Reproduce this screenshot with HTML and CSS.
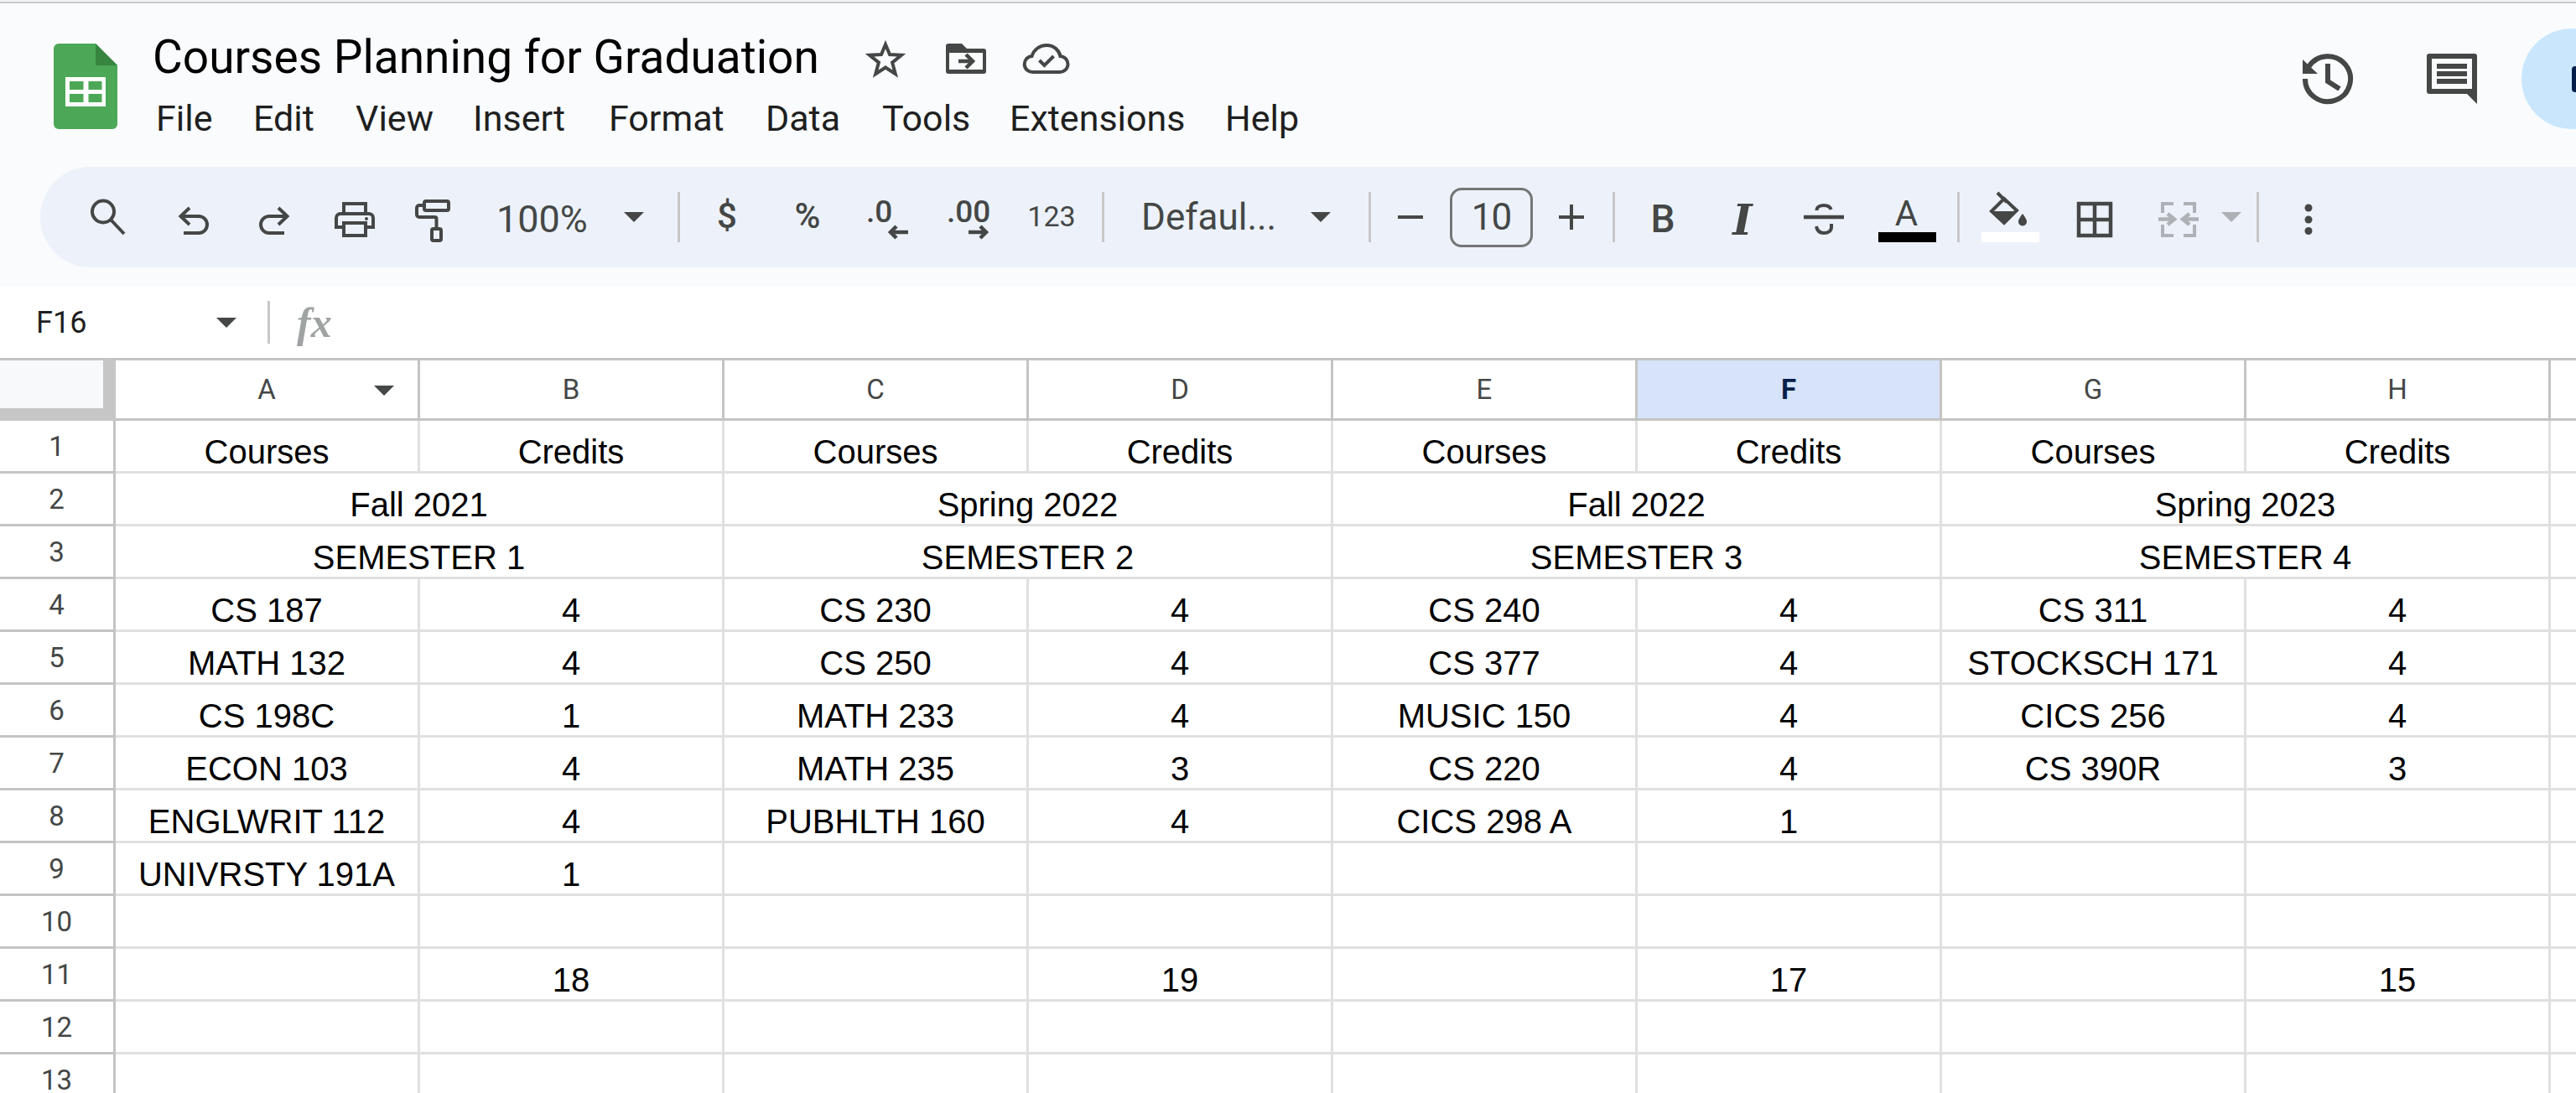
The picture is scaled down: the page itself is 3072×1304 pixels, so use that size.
FILE: index.html
```html
<!DOCTYPE html>
<html lang="en">
<head>
  <meta charset="UTF-8">
  <title>Courses Planning for Graduation</title>
  <link rel="stylesheet" href="styles.css">
</head>
<body>
  <div class="top-line"></div>

  <div class="chrome">
    <!-- Title row -->
    <div class="head">
      <svg class="logo" viewBox="0 0 76 102">
        <path class="logo-body" d="M6 0H50L76 26V96a6 6 0 0 1-6 6H6a6 6 0 0 1-6-6V6a6 6 0 0 1 6-6z"/>
        <path class="logo-fold" d="M50 0L76 26H50z"/>
        <path class="logo-grid" fill-rule="evenodd" d="M14 40H62V75H14zM19 45V55H35.500V45zM41.500 45V55H57.500V45zM19 60V70H35.500V60zM41.500 60V70H57.500V60z"/>
      </svg>

      <div class="head-main">
        <div class="title-row">
          <div class="doc-title">Courses Planning for Graduation</div>
          <svg class="ico title-ico" viewBox="0 0 60 60">
            <path d="M30 13L35 25.100L49 25.800L38.100 34.600L41.800 48.200L30 40.500L18.200 48.200L21.900 34.600L11 25.800L25 25.100z"/>
          </svg>
          <svg class="ico title-ico" viewBox="0 0 60 60">
            <path class="solid" fill-rule="evenodd" d="M9 12H25L31 18H51a3 3 0 0 1 3 3V45a3 3 0 0 1-3 3H9a3 3 0 0 1-3-3V15a3 3 0 0 1 3-3zM10 23V43H50V23z"/>
            <path class="thick" d="M21 33H37M30 25L38 33L30 41"/>
          </svg>
          <svg class="ico title-ico" viewBox="0 0 60 60">
            <path d="M14 46a9.500 9.500 0 0 1-1.500-19C15 19 22 14 30 14c9 0 15 6 16.500 13a9.500 9.500 0 0 1-1 19z"/>
            <path d="M21.500 32l6 6 11-11"/>
          </svg>
        </div>
        <div class="menu">
          <span>File</span>
          <span>Edit</span>
          <span>View</span>
          <span>Insert</span>
          <span>Format</span>
          <span>Data</span>
          <span>Tools</span>
          <span>Extensions</span>
          <span>Help</span>
        </div>
      </div>

      <div class="head-right">
        <svg class="big-ico history" viewBox="0 0 72 72">
          <path class="ring" d="M9 36A27 27 0 1 0 13 22"/>
          <path class="solid" d="M6 13V30H24z"/>
          <path class="ring" d="M36 18V39L50 48"/>
        </svg>
        <svg class="big-ico comments" viewBox="0 0 72 72">
          <path class="solid" fill-rule="evenodd" d="M9 6H63a3 3 0 0 1 3 3V66L54 54H9a3 3 0 0 1-3-3V9a3 3 0 0 1 3-3zM12 12V48H60V12z"/>
          <path class="solid" d="M18 18H54V24H18zM18 27H54V33H18zM18 36H54V42H18z"/>
        </svg>
        <div class="share"><span class="share-ico"></span></div>
      </div>
    </div>

    <!-- Toolbar -->
    <div class="toolbar">
      <svg class="ico" viewBox="0 0 60 60">
        <circle cx="25" cy="23.500" r="13"/>
        <path d="M34 33L50 50"/>
      </svg>
      <svg class="ico" viewBox="0 0 60 60">
        <path d="M25 19L14.500 29L25 39"/>
        <path d="M15 29H36a10 10 0 0 1 0 20H18"/>
      </svg>
      <svg class="ico" viewBox="0 0 60 60">
        <path d="M35 19L45.500 29L35 39"/>
        <path d="M45 29H24a10 10 0 0 0 0 20H42"/>
      </svg>
      <svg class="ico" viewBox="0 0 60 60">
        <path d="M17 25V14H43V25"/>
        <path d="M15 42H8V31a5 5 0 0 1 5-5H47a5 5 0 0 1 5 5V42H45"/>
        <rect x="17" y="37" width="26" height="15"/>
        <circle class="solid" cx="44" cy="32" r="2"/>
      </svg>
      <svg class="ico" viewBox="0 0 60 60">
        <rect x="20" y="11" width="29" height="11" rx="2"/>
        <path d="M20 16H14a3 3 0 0 0-3 3V27a3 3 0 0 0 3 3H32.500a2 2 0 0 1 2 2V42"/>
        <rect x="29" y="44" width="11" height="14" rx="2"/>
      </svg>
      <div class="tb-text zoom-text">100%</div>
      <span class="caret tb-caret"></span>
      <span class="tb-sep"></span>

      <svg class="ico" viewBox="0 0 60 60"><text class="num" x="30" y="43" text-anchor="middle">$</text></svg>
      <svg class="ico" viewBox="0 0 60 60"><text class="num" x="30" y="43" text-anchor="middle">%</text></svg>
      <svg class="ico" viewBox="0 0 60 60">
        <text class="dec" x="4" y="36">.0</text>
        <path class="thick" d="M54 48H33M40 41L33 48L40 55"/>
      </svg>
      <svg class="ico" viewBox="0 0 60 60">
        <text class="dec" x="4" y="36">.00</text>
        <path class="thick" d="M30 48H51M44 41L51 48L44 55"/>
      </svg>
      <svg class="ico" viewBox="0 0 60 60"><text class="digits" x="30" y="41" text-anchor="middle">123</text></svg>
      <span class="tb-sep"></span>

      <div class="tb-text font-name">Defaul...</div>
      <span class="caret tb-caret"></span>
      <span class="tb-sep"></span>

      <svg class="ico" viewBox="0 0 60 60"><path d="M15 30H45"/></svg>
      <div class="font-size">10</div>
      <svg class="ico" viewBox="0 0 60 60"><path d="M15 30H45M30 15V45"/></svg>
      <span class="tb-sep"></span>

      <svg class="ico" viewBox="0 0 60 60"><text class="bold" x="30" y="48" text-anchor="middle">B</text></svg>
      <svg class="ico" viewBox="0 0 60 60"><text class="ital" x="30" y="51" text-anchor="middle">I</text></svg>
      <svg class="ico" viewBox="0 0 60 60">
        <path class="thick" d="M6 30H54"/>
        <path d="M21.500 22c0-4 4-6 8.500-6s7.500 1.500 8.500 5"/>
        <path d="M21 41c1 5 4 8 9 8 5.500 0 9-2.500 9-7V38"/>
      </svg>
      <svg class="ico" viewBox="0 0 60 60">
        <text class="letter" x="29.500" y="40" text-anchor="middle">A</text>
        <rect class="bar-black" x="-4" y="48" width="69" height="12"/>
      </svg>
      <span class="tb-sep"></span>

      <svg class="ico" viewBox="0 0 60 60">
        <path d="M15 1L26 12"/>
        <path d="M8 23L23 8L38 22L23 37z"/>
        <path class="solid" d="M8 23H38L23 37z"/>
        <path class="solid" d="M45 26c0 0-5 6-5 9.500a5 5 0 0 0 10 0c0-3.500-5-9.500-5-9.500z"/>
        <rect class="bar-white" x="-4" y="48" width="69" height="12"/>
      </svg>
      <svg class="ico" viewBox="0 0 60 60">
        <path class="thick" d="M11 14H49V52H11zM30 14V52M11 33H49"/>
      </svg>
      <svg class="ico off" viewBox="0 0 60 60">
        <path d="M24 14H11V25M11 39V52H24M36 14H49V25M49 39V52H36"/>
        <path class="thick" d="M6 32.500H24M17 26L25 32.500L17 39M54 32.500H36M43 26L35 32.500L43 39"/>
      </svg>
      <span class="caret caret-off tb-caret"></span>
      <span class="tb-sep"></span>

      <svg class="ico" viewBox="0 0 60 60">
        <circle class="solid" cx="30" cy="19" r="4.500"/>
        <circle class="solid" cx="30" cy="33" r="4.500"/>
        <circle class="solid" cx="30" cy="46.500" r="4.500"/>
      </svg>
    </div>
  </div>

  <!-- Name box and formula bar -->
  <div class="formula-bar">
    <div class="name-box">F16</div>
    <span class="caret"></span>
    <span class="fx-sep"></span>
    <div class="fx">fx</div>
  </div>

  <table class="sheet">
    <colgroup>
      <col class="col-head">
      <col class="col"><col class="col"><col class="col"><col class="col">
      <col class="col"><col class="col"><col class="col"><col class="col">
      <col class="col-edge">
    </colgroup>
    <thead>
      <tr>
        <th class="corner"><div class="corner-box"></div></th>
        <th>A<span class="caret col-caret"></span></th>
        <th>B</th><th>C</th><th>D</th><th>E</th>
        <th class="selected">F</th>
        <th>G</th><th>H</th><th></th>
      </tr>
    </thead>
    <tbody>
      <tr><th>1</th><td>Courses</td><td>Credits</td><td>Courses</td><td>Credits</td><td>Courses</td><td>Credits</td><td>Courses</td><td>Credits</td><td></td></tr>
      <tr><th>2</th><td colspan="2">Fall 2021</td><td colspan="2">Spring 2022</td><td colspan="2">Fall 2022</td><td colspan="2">Spring 2023</td><td></td></tr>
      <tr><th>3</th><td colspan="2">SEMESTER 1</td><td colspan="2">SEMESTER 2</td><td colspan="2">SEMESTER 3</td><td colspan="2">SEMESTER 4</td><td></td></tr>
      <tr><th>4</th><td>CS 187</td><td>4</td><td>CS 230</td><td>4</td><td>CS 240</td><td>4</td><td>CS 311</td><td>4</td><td></td></tr>
      <tr><th>5</th><td>MATH 132</td><td>4</td><td>CS 250</td><td>4</td><td>CS 377</td><td>4</td><td>STOCKSCH 171</td><td>4</td><td></td></tr>
      <tr><th>6</th><td>CS 198C</td><td>1</td><td>MATH 233</td><td>4</td><td>MUSIC 150</td><td>4</td><td>CICS 256</td><td>4</td><td></td></tr>
      <tr><th>7</th><td>ECON 103</td><td>4</td><td>MATH 235</td><td>3</td><td>CS 220</td><td>4</td><td>CS 390R</td><td>3</td><td></td></tr>
      <tr><th>8</th><td>ENGLWRIT 112</td><td>4</td><td>PUBHLTH 160</td><td>4</td><td>CICS 298 A</td><td>1</td><td></td><td></td><td></td></tr>
      <tr><th>9</th><td>UNIVRSTY 191A</td><td>1</td><td></td><td></td><td></td><td></td><td></td><td></td><td></td></tr>
      <tr><th>10</th><td></td><td></td><td></td><td></td><td></td><td></td><td></td><td></td><td></td></tr>
      <tr><th>11</th><td></td><td>18</td><td></td><td>19</td><td></td><td>17</td><td></td><td>15</td><td></td></tr>
      <tr><th>12</th><td></td><td></td><td></td><td></td><td></td><td></td><td></td><td></td><td></td></tr>
      <tr><th>13</th><td></td><td></td><td></td><td></td><td></td><td></td><td></td><td></td><td></td></tr>
    </tbody>
  </table>
</body>
</html>
```

FILE: styles.css
```css
html, body {
  margin: 0;
  padding: 0;
  height: 100%;
  overflow: hidden;
  background-color: #ffffff;
  font-family: Roboto, Arial, sans-serif;
}

.top-line {
  height: 2px;
  background-color: #f2f2f2;
  border-bottom: 2px solid #cccccf;
}

/* Title and menu area */
.chrome {
  height: 338px;
  box-sizing: border-box;
  background-color: #f9fbfd;
  padding-top: 34px;
}

.head {
  display: flex;
  height: 128px;
  padding-left: 64px;
}

.logo {
  width: 76px;
  height: 102px;
  margin-top: 14px;
  flex: none;
}

.logo-body { fill: #4ca856; }
.logo-fold { fill: #37853f; }
.logo-grid { fill: #ffffff; }

.head-main {
  margin-left: 42px;
  flex: 1;
}

.title-row {
  display: flex;
  gap: 36px;
  height: 60px;
}

.doc-title {
  width: 808px;
  font-size: 55px;
  line-height: 60px;
  color: #000000;
  white-space: nowrap;
}

.title-ico {
  margin-top: 2px;
}

.menu {
  display: grid;
  grid-template-columns: 116px 122px 140px 162px 187px 139px 152px 257px auto;
  margin-top: 18px;
  margin-left: 4px;
  font-size: 43px;
  line-height: 50px;
  color: #1f1f1f;
}

.head-right {
  display: flex;
  align-items: center;
  height: 120px;
  margin-top: -4px;
  flex: none;
}

.big-ico {
  width: 72px;
  height: 72px;
  fill: none;
  stroke: #444746;
  stroke-width: 6;
  flex: none;
}

.comments {
  margin-left: 76px;
}

.share {
  width: 120px;
  height: 120px;
  margin-left: 47px;
  margin-right: -55px;
  border-radius: 60px;
  background-color: #c9e6fc;
  display: flex;
  align-items: center;
  flex: none;
}

.share-ico {
  display: block;
  width: 30px;
  height: 31px;
  margin-left: 60px;
  border-radius: 4px;
  background-color: #041e49;
}

/* Toolbar */
.toolbar {
  display: grid;
  grid-template-columns: 103px 96px 96px 93px 108px 132px 53px 58px 96px 96px 96px 99px 61px 79px 181px 58px 49px 77px 115px 50px 59px 95px 97px 99px 61px 62px 101px 100px 63px 31px 61px 60px;
  align-items: center;
  justify-items: start;
  height: 120px;
  margin-top: 33px;
  margin-left: 48px;
  padding-left: 50px;
  border-radius: 60px 0 0 60px;
  background-color: #edf2fa;
}

.ico {
  display: block;
  width: 60px;
  height: 60px;
  overflow: visible;
  fill: none;
  stroke: #444746;
  stroke-width: 4;
  flex: none;
}

.ico.off {
  stroke: #aeb1b5;
}

.solid {
  fill: #444746;
  stroke: none;
}

.thick {
  stroke-width: 4.500;
}

.ico text {
  fill: #444746;
  stroke: none;
}

.num {
  font-size: 42px;
  font-weight: 500;
}

.dec {
  font-size: 37px;
  font-weight: 500;
}

.digits {
  font-size: 34px;
  font-weight: 400;
}

.bold {
  font-size: 46px;
  font-weight: 500;
}

.ital {
  font-family: "DejaVu Serif", serif;
  font-size: 50px;
  font-weight: 700;
  font-style: italic;
}

.letter {
  font-size: 42px;
}

.bar-black {
  fill: #000000;
  stroke: none;
}

.bar-white {
  fill: #ffffff;
  stroke: none;
}

.tb-text {
  font-size: 45px;
  line-height: 60px;
  color: #444746;
  white-space: nowrap;
}

.zoom-text {
  padding-top: 6px;
  margin-left: -2px;
}

.font-name {
  font-size: 44px;
  margin-left: -3px;
}

.caret {
  display: block;
  width: 0;
  height: 0;
  border-left: 12px solid transparent;
  border-right: 12px solid transparent;
  border-top: 12px solid #444746;
  flex: none;
}

.caret-off {
  border-top-color: #aeb1b5;
}

.tb-caret {
  margin-left: 18px;
}

.tb-sep {
  display: block;
  width: 3px;
  height: 60px;
  margin-left: 29px;
  background-color: #c7c7c7;
}

.font-size {
  display: flex;
  align-items: center;
  justify-content: center;
  box-sizing: border-box;
  width: 99px;
  height: 71px;
  border: 3px solid #747775;
  border-radius: 14px;
  font-size: 44px;
  letter-spacing: -1px;
  color: #444746;
}

/* Formula bar */
.formula-bar {
  display: flex;
  align-items: center;
  height: 85px;
  padding-left: 43px;
}

.name-box {
  width: 215px;
  font-size: 36px;
  color: #1f1f1f;
}

.fx-sep {
  display: block;
  width: 3px;
  height: 51px;
  margin-left: 37px;
  background-color: #c7c7c7;
}

.fx {
  margin-left: 32px;
  font-family: "Liberation Serif", serif;
  font-size: 50px;
  font-weight: 700;
  font-style: italic;
  color: #a0a3a3;
}

/* Sheet */
.sheet {
  table-layout: fixed;
  width: 3072px;
  border-collapse: separate;
  border-spacing: 0;
  border-top: 3px solid #c4c4c4;
}

.col-head { width: 138px; }
.col { width: 363px; }
.col-edge { width: 30px; }

.sheet th,
.sheet td {
  box-sizing: border-box;
  height: 63px;
  padding: 0;
  overflow: visible;
  white-space: nowrap;
  text-align: center;
}

.sheet th {
  position: relative;
  font-size: 33px;
  font-weight: 400;
  color: #444746;
  border-right: 3px solid #c4c4c4;
  border-bottom: 3px solid #c4c4c4;
}

.sheet thead th {
  height: 72px;
}

.sheet td {
  vertical-align: bottom;
  font-family: "Liberation Sans", Arial, sans-serif;
  font-size: 40px;
  line-height: 46px;
  color: #000000;
  border-right: 3px solid #e0e0e0;
  border-bottom: 3px solid #e0e0e0;
}

.sheet tr > :last-child {
  border-right: 0;
}

.sheet th.corner {
  vertical-align: top;
  background-color: #c6c6c6;
  border-right: 0;
  border-bottom: 0;
}

.corner-box {
  width: 123px;
  height: 57px;
  background-color: #f8f9fa;
}

.sheet th.selected {
  font-weight: 700;
  color: #041e49;
  background-color: #d6e3f9;
}

.col-caret {
  position: absolute;
  top: 30px;
  right: 28px;
}
```
